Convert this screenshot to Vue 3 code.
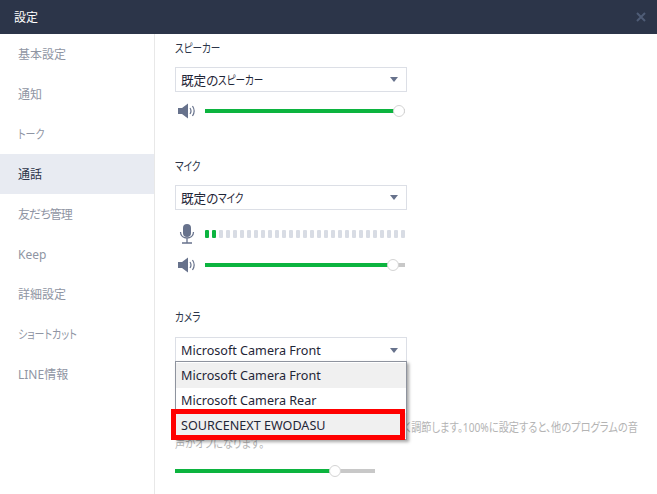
<template>
  <div class="window">
    <header class="titlebar">
      <span class="title">設定</span>
      <svg class="close" width="10" height="10" viewBox="0 0 10 10">
        <path d="M1 1l8 8M9 1l-8 8" stroke="#4f5c76" stroke-width="2" fill="none" />
      </svg>
    </header>
    <div class="body">
      <nav class="side">
        <div
          v-for="item in menu"
          :key="item.text"
          class="side-item"
          :class="{ active: item.text === '通話' }"
        ><span :class="item.cls">{{ item.text }}</span></div>
      </nav>
      <main class="main">
        <section class="group speaker">
          <h3 class="label"><span class="kana">スピーカー</span></h3>
          <div class="select">
            <span>既定の<span class="kana">スピーカー</span></span>
            <i class="caret"></i>
          </div>
          <div class="row">
            <svg class="ico" width="18" height="16" viewBox="0 0 18 16">
              <path d="M0 5h4l6-4.500v15l-6-4.500H0z" fill="#67728c" />
              <path d="M12 5c1.200 1.800 1.200 4.200 0 6M14.500 3c2 3 2 7 0 10" stroke="#67728c" stroke-width="1.200" fill="none" />
            </svg>
            <div class="slider wide">
              <div class="fill" style="width: 190px"></div>
              <div class="knob" style="left: 188px"></div>
            </div>
          </div>
        </section>

        <section class="group mic">
          <h3 class="label"><span class="kana">マイク</span></h3>
          <div class="select">
            <span>既定の<span class="kana">マイク</span></span>
            <i class="caret"></i>
          </div>
          <div class="row meter-row">
            <svg class="ico" width="18" height="20" viewBox="0 0 18 20">
              <rect x="5" y="0" width="8" height="13" rx="4" fill="#67728c" />
              <path d="M2.500 8c0 8 13 8 13 0M9 14v4.500M4 19h10" stroke="#67728c" stroke-width="1.300" fill="none" />
            </svg>
            <div class="meter">
              <i v-for="n in 29" :key="n" class="tick" :class="{ on: n < 3 }"></i>
            </div>
          </div>
          <div class="row">
            <svg class="ico" width="18" height="16" viewBox="0 0 18 16">
              <path d="M0 5h4l6-4.500v15l-6-4.500H0z" fill="#67728c" />
              <path d="M12 5c1.200 1.800 1.200 4.200 0 6M14.500 3c2 3 2 7 0 10" stroke="#67728c" stroke-width="1.200" fill="none" />
            </svg>
            <div class="slider wide">
              <div class="fill" style="width: 183px"></div>
              <div class="knob" style="left: 182px"></div>
            </div>
          </div>
        </section>

        <section class="group camera">
          <h3 class="label"><span class="kana">カメラ</span></h3>
          <div class="select-wrap">
            <div class="select">
              <span>Microsoft Camera Front</span>
              <i class="caret"></i>
            </div>
            <ul class="dropdown">
              <li class="hover">Microsoft Camera Front</li>
              <li>Microsoft Camera Rear</li>
              <li class="hover">SOURCENEXT EWODASU</li>
            </ul>
            <div class="redbox"></div>
          </div>
          <p class="desc">通話中は、他のプログラムの音量を自動的により小さく調節します。100%に設定すると、他のプログラムの音<br />声がオフになります。</p>
          <div class="slider narrow">
            <div class="fill" style="width: 155px"></div>
            <div class="knob" style="left: 154px"></div>
          </div>
        </section>
      </main>
    </div>
  </div>
</template>

<script setup>
const menu = [
  { text: '基本設定' },
  { text: '通知' },
  { text: 'トーク', cls: 'kana' },
  { text: '通話' },
  { text: '友だち管理', cls: 'tight' },
  { text: 'Keep' },
  { text: '詳細設定' },
  { text: 'ショートカット', cls: 'kana' },
  { text: 'LINE情報' },
];
</script>

<style>
html, body {
  margin: 0;
  background: #fff;
  overflow: hidden;
}
</style>

<style scoped>
.window {
  width: 657px;
  height: 494px;
  display: flex;
  flex-direction: column;
  overflow: hidden;
  font-family: "Noto Sans", "Noto Sans CJK JP", sans-serif;
  font-size: 12.6px;
  font-feature-settings: "palt";
  color: #2c3549;
}
.titlebar {
  height: 34px;
  flex: none;
  background: #2c3549;
  display: flex;
  align-items: center;
  justify-content: space-between;
  padding: 0 11px 0 14px;
}
.title {
  color: #fff;
  font-size: 12px;
}
.body {
  flex: 1;
  display: flex;
  min-height: 0;
}
.side {
  width: 154px;
  flex: none;
  border-right: 1px solid #e8e8e8;
}
.side-item {
  height: 40px;
  line-height: 41px;
  padding-left: 18px;
  font-size: 12px;
  color: #8f95a3;
}
.side-item.active {
  background: #e8ebf2;
  color: #2c3549;
}
/* katakana in the original font is much narrower than Noto's */
.kana {
  display: inline-block;
  font-size: 12px;
  transform: scaleX(0.8);
  transform-origin: left center;
}
.side-item .kana {
  transform: scaleX(0.83);
}
.tight {
  letter-spacing: -1px;
}
.main {
  flex: 1;
  padding-left: 20px;
  min-width: 0;
}
.label {
  margin: 0;
  font-size: 12px;
  font-weight: 400;
  line-height: 18px;
  color: #2c3549;
}
.speaker {
  padding-top: 6px;
}
.mic {
  padding-top: 39px;
}
.camera {
  padding-top: 36px;
}
.select-wrap {
  position: relative;
  margin-top: 10px;
}
.select {
  box-sizing: border-box;
  width: 232px;
  height: 25px;
  margin-top: 9px;
  padding: 0 8px 0 5px;
  border: 1px solid #dcdfe6;
  display: flex;
  align-items: center;
  justify-content: space-between;
  color: #1f2637;
  background: #fff;
}
.select-wrap .select {
  margin-top: 0;
  padding-top: 1px;
}
.caret {
  width: 0;
  height: 0;
  border-left: 4px solid transparent;
  border-right: 4px solid transparent;
  border-top: 5px solid #67728c;
}
.row {
  display: flex;
  align-items: center;
  width: 232px;
  height: 16px;
  margin-top: 11px;
}
.meter-row {
  height: 20px;
  margin-top: 14px;
}
.mic .meter-row + .row {
  margin-top: 13px;
}
.ico {
  flex: none;
  width: 18px;
  margin-left: 3px;
  margin-right: 9px;
}
.slider {
  position: relative;
  height: 4px;
  background: #c8c8c8;
}
.slider.wide {
  width: 200px;
}
.slider.narrow {
  width: 200px;
  margin-top: 17px;
}
.fill {
  height: 100%;
  background: #0cb43f;
}
.knob {
  position: absolute;
  top: -4px;
  box-sizing: border-box;
  width: 12px;
  height: 12px;
  background: #fff;
  border: 1px solid #d4d4d4;
  border-radius: 50%;
}
.meter {
  display: flex;
  gap: 3px;
  width: 200px;
  overflow: hidden;
}
.tick {
  flex: none;
  width: 4px;
  height: 8px;
  border-radius: 1px;
  background: #d8dce4;
}
.tick.on {
  background: #0cb43f;
}
.dropdown {
  position: absolute;
  top: 24px;
  left: 0;
  box-sizing: border-box;
  width: 232px;
  margin: 0;
  padding: 1px 0;
  list-style: none;
  background: #fff;
  border: 1px solid #8e939e;
  box-shadow: 2px 2px 3px rgba(0, 0, 0, 0.35);
  z-index: 2;
}
.dropdown li {
  height: 25px;
  line-height: 25px;
  padding-left: 5px;
  color: #1f2637;
}
.dropdown li.hover {
  background: #f0f0f0;
}
.redbox {
  position: absolute;
  top: 72px;
  left: -4px;
  box-sizing: border-box;
  width: 234px;
  height: 31px;
  border: 5px solid #f00;
  z-index: 3;
}
.desc {
  margin: 58px 0 0;
  font-size: 12px;
  line-height: 16px;
  white-space: nowrap;
  color: #b4b4b4;
  transform: scaleX(0.85);
  transform-origin: left center;
}
</style>
